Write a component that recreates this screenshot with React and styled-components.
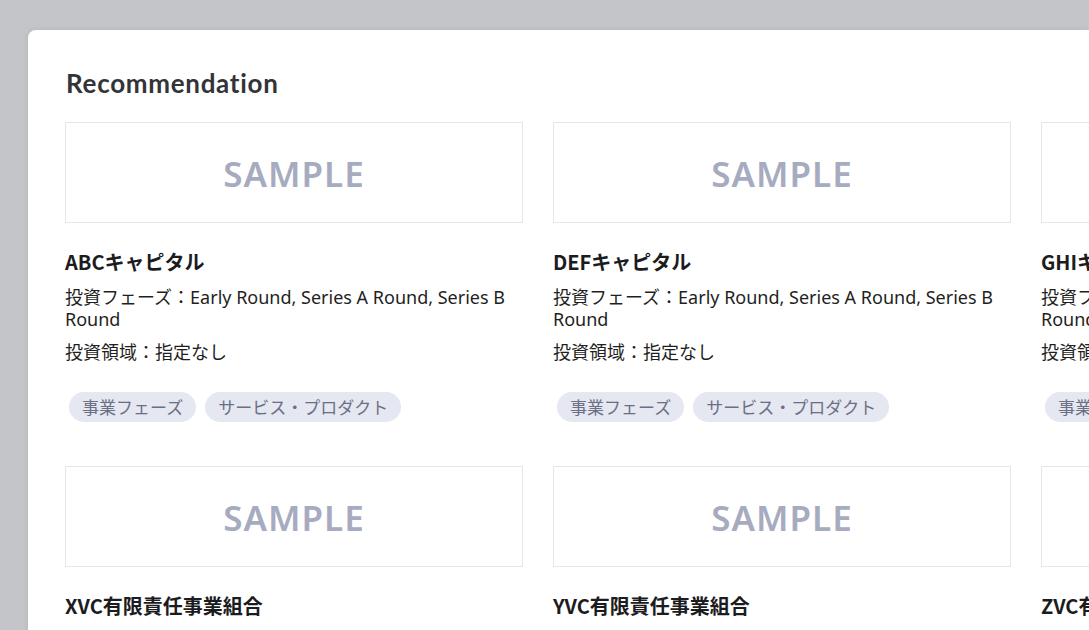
import React from "react";
import styled, { createGlobalStyle } from "styled-components";

const GlobalStyle = createGlobalStyle`
  html, body {
    margin: 0;
    padding: 0;
    background: #c4c5c9;
    overflow: hidden;
  }
  body {
    font-family: "Noto Sans", "Noto Sans CJK JP", sans-serif;
  }
`;

const Page = styled.div`
  width: 1089px;
  height: 630px;
  padding: 30px 0 0 28px;
  box-sizing: border-box;
  overflow: hidden;
`;

const Panel = styled.section`
  background: #ffffff;
  border-radius: 8px 0 0 0;
  box-shadow: 0 0 6px rgba(0, 0, 0, 0.08);
  padding: 38px 0 40px 37px;
  height: 700px;
  box-sizing: border-box;
`;

const Title = styled.h2`
  margin: 0 0 24px;
  font-family: "Lato", "Noto Sans", sans-serif;
  font-weight: 700;
  font-size: 26px;
  line-height: 30px;
  color: #333438;
  letter-spacing: 0.7px;
  padding-left: 1px;
`;

const Grid = styled.div`
  display: grid;
  grid-template-columns: repeat(3, 458px);
  column-gap: 30px;
  row-gap: 44px;
`;

const Card = styled.article`
  display: flex;
  flex-direction: column;
`;

const Thumb = styled.div`
  height: 101px;
  box-sizing: border-box;
  border: 1px solid #e4e5ef;
  display: flex;
  align-items: center;
  justify-content: center;
  padding-top: 2px;
  font-family: "Noto Sans", sans-serif;
  font-weight: 600;
  font-size: 35px;
  letter-spacing: 1px;
  color: #a7abbf;
`;

const Name = styled.h3`
  margin: 26px 0 11px;
  font-family: "Noto Sans CJK JP", sans-serif;
  font-weight: 700;
  font-size: 20px;
  line-height: 26px;
  color: #1c1c1f;
`;

const Detail = styled.p`
  margin: 0 0 11px;
  font-family: "Noto Sans", "Noto Sans CJK JP", sans-serif;
  font-size: 18px;
  line-height: 22px;
  color: #1f1f22;
  padding-right: 10px;
`;

const Tags = styled.div`
  display: flex;
  gap: 9px;
  margin: 18px 0 0 4px;
`;

const Tag = styled.span`
  height: 30px;
  padding: 0 13px;
  border-radius: 15px;
  background: #e5e7f1;
  color: #6b6f86;
  font-family: "Noto Sans CJK JP", sans-serif;
  font-size: 17px;
  line-height: 30px;
  white-space: nowrap;
`;

const companies = [
  "ABCキャピタル",
  "DEFキャピタル",
  "GHIキャピタル",
  "XVC有限責任事業組合",
  "YVC有限責任事業組合",
  "ZVC有限責任事業組合",
];

export default function App() {
  return (
    <>
      <GlobalStyle />
      <Page>
        <Panel>
          <Title>Recommendation</Title>
          <Grid>
            {companies.map((name) => (
              <Card key={name}>
                <Thumb>SAMPLE</Thumb>
                <Name>{name}</Name>
                <Detail>投資フェーズ：Early Round, Series A Round, Series B Round</Detail>
                <Detail>投資領域：指定なし</Detail>
                <Tags>
                  <Tag>事業フェーズ</Tag>
                  <Tag>サービス・プロダクト</Tag>
                </Tags>
              </Card>
            ))}
          </Grid>
        </Panel>
      </Page>
    </>
  );
}
